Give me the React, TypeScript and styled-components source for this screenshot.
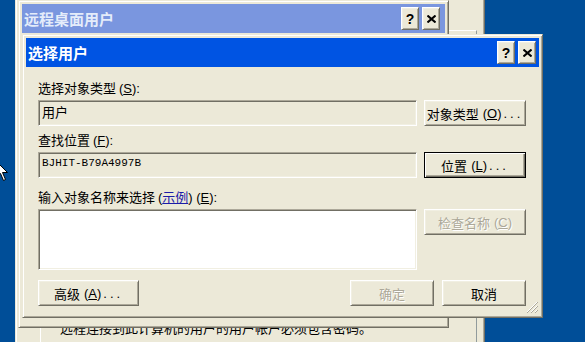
import React from "react";
import styled, { createGlobalStyle } from "styled-components";

const GlobalStyle = createGlobalStyle`
  html, body {
    margin: 0;
    padding: 0;
    overflow: hidden;
  }
  body {
    font-family: "Liberation Sans", "Noto Sans CJK SC", sans-serif;
    font-size: 13px;
    color: #000;
  }
`;

const Desktop = styled.div`
  position: relative;
  width: 585px;
  height: 342px;
  background: #004e98;
  overflow: hidden;
`;

// classic 3d window frame: light outer, white inner, dark bottom/right
const Window = styled.div`
  position: absolute;
  box-sizing: border-box;
  background: #ece9d8;
  border: 1px solid;
  border-color: #ece9d8 #716f64 #716f64 #ece9d8;
  box-shadow: inset 1px 1px #fff, inset -1px -1px #aca899;
  padding: 3px;
`;

const SystemWindow = styled(Window)`
  left: 15px;
  top: -10px;
  width: 470px;
  height: 370px;
`;

const TabPage = styled.div`
  margin: 36px 4px 0 21px;
  height: 340px;
  border: 1px solid;
  border-color: #fff #919b9c #919b9c #fff;
  padding: 290px 0 0 19px;
  box-sizing: border-box;
`;

const Notice = styled.div`
  font-size: 13px;
  line-height: 16px;
  white-space: nowrap;
`;

const RemoteDialog = styled(Window)`
  left: 18px;
  top: 0;
  width: 431px;
  height: 328px;
`;

const MainDialog = styled(Window)`
  left: 22px;
  top: 34px;
  width: 521px;
`;

const TitleBar = styled.div<{ $active?: boolean; $padRight: number }>`
  display: flex;
  align-items: center;
  height: 29px;
  padding: 0 ${(p) => p.$padRight}px 0 2px;
  background: ${(p) => (p.$active ? "#0054e3" : "#7a96df")};
  color: ${(p) => (p.$active ? "#fff" : "#e4ecfa")};
  font-family: "Noto Sans CJK SC", sans-serif;
  font-weight: bold;
  font-size: 15px;
`;

const TitleText = styled.span`
  flex: 1;
  white-space: nowrap;
`;

const CaptionButtons = styled.div`
  display: flex;
  gap: 3px;
`;

const raised = `
  background: #ece9d8;
  border: 1px solid;
  border-color: #fff #716f64 #716f64 #fff;
  box-shadow: inset 1px 1px #f1efe2, inset -1px -1px #aca899;
  box-sizing: border-box;
`;

const CaptionButton = styled.div`
  ${raised}
  width: 18px;
  height: 23px;
  display: flex;
  align-items: center;
  justify-content: center;
  color: #000;
  font-family: "Liberation Sans", sans-serif;
  font-weight: bold;
  font-size: 14px;
`;

const Client = styled.div`
  padding: 13px 13px 8px 12px;
  font-family: "Noto Sans CJK SC", sans-serif;
`;

const Form = styled.div`
  display: grid;
  grid-template-columns: 379px 102px;
  column-gap: 7px;
  align-items: start;
`;

const Label = styled.div<{ $top: number }>`
  grid-column: 1 / -1;
  margin: ${(p) => p.$top}px 0 4px 0;
  height: 16px;
  line-height: 16px;
  font-size: 13px;
  white-space: nowrap;
`;

const Key = styled.span`
  text-decoration: underline;
  text-underline-offset: 1px;
`;

const HelpLink = styled.span`
  color: #1c1ca8;
  text-decoration: underline;
`;

const Field = styled.div<{ $mono?: boolean; $white?: boolean; $height: number }>`
  box-sizing: border-box;
  height: ${(p) => p.$height}px;
  background: ${(p) => (p.$white ? "#fff" : "#ece9d8")};
  border: 1px solid;
  border-color: #aca899 #fff #fff #aca899;
  box-shadow: inset 1px 1px #716f64, inset -1px -1px #f1efe2;
  padding: 2px 3px 0 3px;
  font-family: ${(p) =>
    p.$mono ? '"Liberation Mono", monospace' : '"Noto Sans CJK SC", sans-serif'};
  font-size: ${(p) => (p.$mono ? "11px" : "13px")};
  line-height: 17px;
`;

const Button = styled.div<{ $width: number; $default?: boolean; $disabled?: boolean }>`
  ${raised}
  width: ${(p) => p.$width}px;
  height: 26px;
  display: flex;
  align-items: center;
  justify-content: center;
  font-family: "Noto Sans CJK SC", sans-serif;
  font-size: 13px;
  white-space: nowrap;
  color: ${(p) => (p.$disabled ? "#aca899" : "#000")};
  text-shadow: ${(p) => (p.$disabled ? "1px 1px #fff" : "none")};
  ${(p) =>
    p.$default &&
    `
    border-color: #000;
    box-shadow: inset 1px 1px #fff, inset -1px -1px #716f64, inset -2px -2px #aca899;
  `}
`;

const Paren = styled.span<{ $gap?: number }>`
  font-family: "Liberation Sans", sans-serif;
  margin-left: ${(p) => p.$gap ?? 4}px;
`;

const Dots = styled.span`
  font-family: "Liberation Sans", sans-serif;
  letter-spacing: 3px;
  margin-left: 2px;
`;

const Footer = styled.div`
  grid-column: 1 / -1;
  margin-top: 10px;
  display: flex;
  justify-content: space-between;
`;

const FooterRight = styled.div`
  display: flex;
  gap: 8px;
`;

const Grip = styled.svg`
  position: absolute;
  right: 4px;
  bottom: 4px;
`;

const Cursor = styled.svg`
  position: absolute;
  left: -4px;
  top: 161px;
`;

const CloseGlyph = () => (
  <svg width="9" height="8" viewBox="0 0 9 8">
    <path d="M0.5 0.5 L8.5 7.5 M8.5 0.5 L0.5 7.5" stroke="#000" strokeWidth="2" />
  </svg>
);

const Caption = (props: { title: string; active?: boolean; padRight: number }) => (
  <TitleBar $active={props.active} $padRight={props.padRight}>
    <TitleText>{props.title}</TitleText>
    <CaptionButtons>
      <CaptionButton>?</CaptionButton>
      <CaptionButton>
        <CloseGlyph />
      </CaptionButton>
    </CaptionButtons>
  </TitleBar>
);

const App = () => {
  return (
    <Desktop>
      <GlobalStyle />

      <SystemWindow>
        <TabPage>
          <Notice>远程连接到此计算机的用户的用户帐户必须包含密码。</Notice>
        </TabPage>
      </SystemWindow>

      <RemoteDialog>
        <Caption title="远程桌面用户" padRight={5} />
      </RemoteDialog>

      <MainDialog>
        <Caption title="选择用户" active padRight={3} />
        <Client>
          <Form>
            <Label $top={0}>
              选择对象类型 <Paren $gap={0}>(<Key>S</Key>):</Paren>
            </Label>
            <Field $height={26}>用户</Field>
            <Button $width={102}>
              对象类型<Paren>(<Key>O</Key>)</Paren>
              <Dots>...</Dots>
            </Button>

            <Label $top={6}>
              查找位置 <Paren $gap={0}>(<Key>F</Key>):</Paren>
            </Label>
            <Field $height={26} $mono>
              BJHIT-B79A4997B
            </Field>
            <Button $width={102} $default>
              位置<Paren>(<Key>L</Key>)</Paren>
              <Dots>...</Dots>
            </Button>

            <Label $top={11}>
              输入对象名称来选择 <Paren $gap={0}>(</Paren>
              <HelpLink>示例</HelpLink>
              <Paren $gap={0}>) (<Key>E</Key>):</Paren>
            </Label>
            <Field $height={61} $white />
            <Button $width={102} $disabled>
              检查名称<Paren>(<Key>C</Key>)</Paren>
            </Button>

            <Footer>
              <Button $width={101}>
                高级<Paren>(<Key>A</Key>)</Paren>
                <Dots>...</Dots>
              </Button>
              <FooterRight>
                <Button $width={84} $disabled>
                  确定
                </Button>
                <Button $width={84}>取消</Button>
              </FooterRight>
            </Footer>
          </Form>
        </Client>
        <Grip width="12" height="12" viewBox="0 0 12 12">
          <path d="M11 1 L1 11 M11 5 L5 11 M11 9 L9 11" stroke="#fff" strokeWidth="1" />
          <path d="M12 1 L1 12 M12 5 L5 12 M12 9 L9 12" stroke="#aca899" strokeWidth="1" />
        </Grip>
      </MainDialog>

      <Cursor width="14" height="22" viewBox="0 0 14 22">
        <path
          d="M0.5 0.5 L0.5 16.5 L4.5 12.5 L7.5 19.5 L9.5 18.5 L6.5 11.5 L11.5 11.5 Z"
          fill="#fff"
          stroke="#000"
          strokeWidth="1"
        />
      </Cursor>
    </Desktop>
  );
};

export default App;
